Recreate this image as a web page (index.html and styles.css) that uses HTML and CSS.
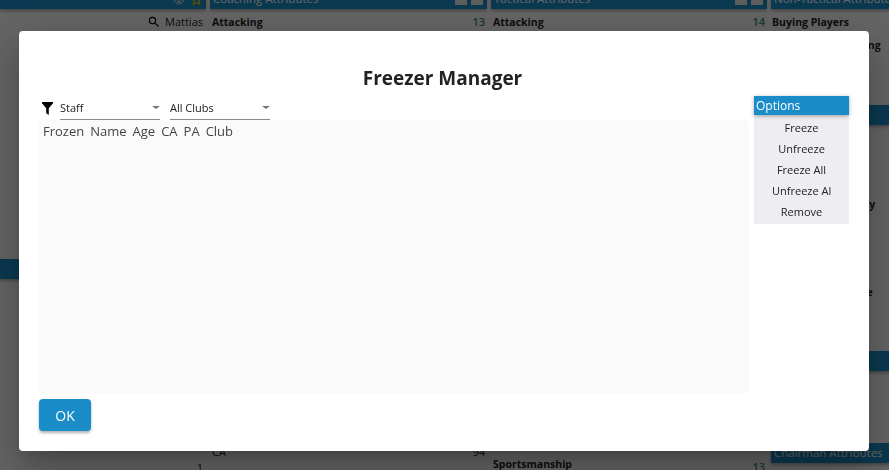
FILE: index.html
```html
<!DOCTYPE html>
<html lang="en">

<head>
  <meta charset="UTF-8">
  <meta name="viewport" content="width=device-width, initial-scale=1.0">
  <title>Freezer Manager</title>

  <link rel="stylesheet" href="styles.css">
</head>

<body>
  <!-- page behind the dialog -->
  <div class="page">
    <div class="col">
      <div class="bar bar-icons">
        <svg class="bar-icon" viewBox="0 0 24 24" fill="#d8d8d8"><path d="M22 11h-4.17l3.24-3.24-1.41-1.42L15 11h-2V9l4.66-4.66-1.42-1.41L13 6.17V2h-2v4.17L7.76 2.93 6.34 4.34 11 9v2H9L4.34 6.34 2.93 7.76 6.17 11H2v2h4.17l-3.24 3.24 1.41 1.42L9 13h2v2l-4.66 4.66 1.42 1.41L11 17.83V22h2v-4.17l3.24 3.24 1.42-1.41L13 15v-2h2l4.66 4.66 1.41-1.42L17.83 13H22z"/></svg>
        <svg class="bar-icon star" viewBox="0 0 24 24" fill="none" stroke="#e0c000" stroke-width="2.5"><path d="M12 3l2.8 6.2 6.7.7-5 4.5 1.4 6.6L12 17.6 6.1 21l1.4-6.6-5-4.5 6.7-.7z"/></svg>
      </div>
      <div class="row row-search">
        <svg class="search" viewBox="0 0 24 24" fill="#000"><path d="M15.5 14h-.79l-.28-.27A6.47 6.47 0 0 0 16 9.5 6.5 6.5 0 1 0 9.5 16c1.61 0 3.09-.59 4.23-1.57l.27.28v.79l5 4.99L20.49 19l-4.99-5zm-6 0C7.01 14 5 11.99 5 9.5S7.01 5 9.5 5 14 7.01 14 9.5 11.99 14 9.5 14z"/></svg>
        <span>Mattias</span>
      </div>
      <div class="skip skip-left-a"></div>
      <div class="bar"></div>
      <div class="skip skip-left-b"></div>
      <div class="row row-low row-end"><span class="val-plain">1</span></div>
    </div>

    <div class="col">
      <div class="bar">
        <span>Coaching Attributes</span>
        <span class="squares"><i></i><i></i></span>
      </div>
      <div class="row"><b>Attacking</b><span class="val">13</span></div>
      <div class="skip skip-mid-a"></div>
      <div class="row"><span>CA</span><span class="val-plain">94</span></div>
    </div>

    <div class="col">
      <div class="bar">
        <span>Tactical Attributes</span>
        <span class="squares"><i></i><i></i></span>
      </div>
      <div class="row"><b>Attacking</b><span class="val">14</span></div>
      <div class="skip skip-mid-b"></div>
      <div class="row row-low"><b>Sportsmanship</b><span class="val">13</span></div>
    </div>

    <div class="col col-last">
      <div class="bar"><span>Non-Tactical Attributes</span></div>
      <div class="row"><b>Buying Players</b></div>
      <div class="row"><b>Hardness of Training</b></div>
      <div class="skip skip-right-a"></div>
      <div class="bar"></div>
      <div class="skip skip-right-b"></div>
      <div class="row"><b>Judging Staff Ability</b></div>
      <div class="skip skip-right-c"></div>
      <div class="row"><b>Tactical Knowledge</b></div>
      <div class="skip skip-right-d"></div>
      <div class="bar"></div>
      <div class="row row-tight"><b>Use of Sports Data</b></div>
      <div class="row row-flush"><b>Financial Acumen</b></div>
      <div class="skip skip-right-e"></div>
      <div class="bar"><span>Chairman Attributes</span></div>
    </div>
  </div>

  <div class="backdrop"></div>

  <div class="dialog">
    <h2 class="title">Freezer Manager</h2>

    <div class="content">
      <div class="main">
        <div class="filters">
          <svg class="filter-icon" viewBox="0 0 12 14" fill="#000"><path d="M0 0h12v1.4L7.4 6.6V14L4.6 12.2V6.6L0 1.4z"/></svg>
          <div class="select"><span>Staff</span><i class="arrow"></i></div>
          <div class="select"><span>All Clubs</span><i class="arrow"></i></div>
        </div>
        <div class="list">
          <div class="list-head">
            <span>Frozen</span>
            <span>Name</span>
            <span>Age</span>
            <span>CA</span>
            <span>PA</span>
            <span>Club</span>
          </div>
        </div>
      </div>

      <div class="options">
        <div class="options-head">Options</div>
        <div class="option"><span>Freeze</span></div>
        <div class="option"><span>Unfreeze</span></div>
        <div class="option"><span>Freeze All</span></div>
        <div class="option"><span>Unfreeze All</span></div>
        <div class="option"><span>Remove</span></div>
      </div>
    </div>

    <button class="ok">OK</button>
  </div>
</body>

</html>
```

FILE: styles.css
```css
* {
  margin: 0;
  padding: 0;
  box-sizing: border-box;
}

html,
body {
  height: 100%;
  overflow: hidden;
}

body {
  font-family: "Open Sans", "Noto Sans", sans-serif;
  background: #fafafa;
  color: #222;
}

/* page behind the dialog */
.page {
  display: grid;
  grid-template-columns: 206px 277px 276px 1fr;
  gap: 4px;
  margin-top: -11px;
  font-size: 11px;
}

.col {
  min-width: 0;
}

.bar {
  display: flex;
  justify-content: space-between;
  align-items: center;
  height: 20px;
  padding: 0 4px 0 3px;
  background: #1a8dc8;
  color: #fff;
  font-size: 11.5px;
  white-space: nowrap;
  box-shadow: 0 2px 3px rgba(0, 0, 0, 0.3);
}

.bar > span:first-child {
  margin-top: -2px;
}

.bar-icons {
  justify-content: flex-end;
  gap: 4px;
  padding-right: 3px;
}

.bar-icon {
  width: 14px;
  height: 14px;
}

.star {
  width: 13px;
  height: 13px;
}

.squares {
  display: flex;
  gap: 4px;
}

.squares i {
  display: block;
  width: 12px;
  height: 12px;
  background: #e8e8e8;
}

.row {
  display: flex;
  justify-content: space-between;
  align-items: center;
  height: 22px;
  padding: 1px 2px 0;
  margin-top: 1px;
  white-space: nowrap;
}

.row b {
  font-size: 10.5px;
}

.col-last .row {
  padding-left: 1px;
}

.row-search {
  justify-content: flex-end;
  gap: 4px;
  padding-right: 3px;
}

.row-end {
  justify-content: flex-end;
  padding-right: 3px;
}

.row-low {
  align-items: flex-end;
}

.row-low b {
  align-self: center;
}

.row-tight {
  margin-top: -2px;
}

.row-flush {
  margin-top: 0;
}

.search {
  width: 14px;
  height: 14px;
}

.val {
  color: #3a8a60;
  font-weight: 600;
  font-size: 11px;
}

.skip-left-a {
  height: 227px;
}

.skip-left-b {
  height: 173px;
}

.skip-mid-a {
  height: 407px;
}

.skip-mid-b {
  height: 419px;
}

.skip-right-a {
  height: 50px;
}

.skip-right-b {
  height: 66px;
}

.skip-right-c {
  height: 65px;
}

.skip-right-d {
  height: 49px;
}

.skip-right-e {
  height: 30px;
}

.backdrop {
  position: fixed;
  inset: 0;
  background: rgba(0, 0, 0, 0.6);
}

.dialog {
  position: fixed;
  top: 31px;
  left: 19px;
  display: flex;
  flex-direction: column;
  width: 850px;
  height: 420px;
  padding: 34px 20px 20px;
  background: #fff;
  border-radius: 4px;
  box-shadow: 0 11px 15px -7px rgba(0, 0, 0, 0.2), 0 24px 38px 3px rgba(0, 0, 0, 0.14), 0 9px 46px 8px rgba(0, 0, 0, 0.12);
}

.title {
  height: 32px;
  padding-right: 3px;
  font-size: 19px;
  line-height: 26px;
  font-weight: 700;
  text-align: center;
}

.content {
  display: flex;
  gap: 5px;
  height: 297px;
  margin-top: -1px;
}

.main {
  display: flex;
  flex-direction: column;
  width: 710px;
}

.filters {
  display: flex;
  align-items: flex-start;
  gap: 10px;
  height: 24px;
}

.filter-icon {
  width: 11px;
  height: 13px;
  margin: 6px -3px 0 3px;
}

.select {
  position: relative;
  width: 100px;
  height: 24px;
  font-size: 11px;
  line-height: 23px;
  border-bottom: 1px solid #8a8a8a;
}

.arrow {
  position: absolute;
  right: 0;
  top: 10px;
  border-left: 4px solid transparent;
  border-right: 4px solid transparent;
  border-top: 3.5px solid #757575;
}

.list {
  flex: 1;
  padding: 2px 4px;
  background: #fafafa;
  border-radius: 4px;
}

.list-head {
  display: flex;
  gap: 6px;
  font-size: 13px;
  line-height: 18px;
  color: #444;
}

.options {
  width: 95px;
  height: 128px;
  background: #eeedf2;
}

.options-head {
  height: 19px;
  margin-bottom: 2px;
  padding-left: 2px;
  background: #1a8dc8;
  color: #fff;
  font-size: 12px;
  line-height: 20px;
  box-shadow: 0 1px 4px rgba(0, 0, 0, 0.35);
}

.option {
  display: flex;
  justify-content: center;
  height: 21px;
  font-size: 11px;
  line-height: 21px;
}

.option span {
  width: 59px;
  overflow: hidden;
  white-space: nowrap;
  text-align: center;
}

.ok {
  width: 52px;
  height: 32px;
  margin-top: 6px;
  border: 0;
  border-radius: 4px;
  background: #1a8dc8;
  color: #fff;
  font-family: inherit;
  font-size: 14px;
  box-shadow: 0 2px 3px rgba(0, 0, 0, 0.3);
}
```
